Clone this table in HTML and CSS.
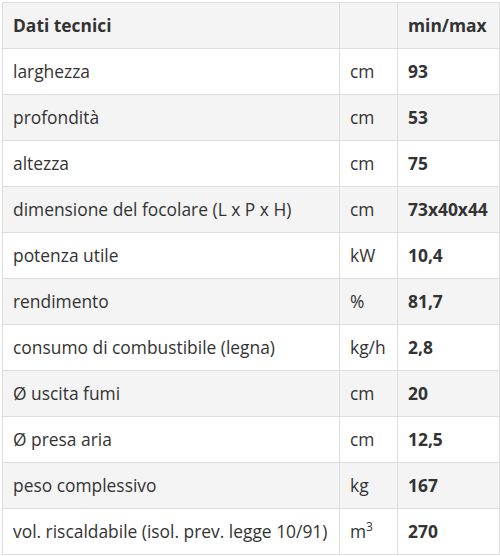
FILE: index.html
```html
<!DOCTYPE html>
<html lang="it">
<head>
<meta charset="utf-8">
<link rel="stylesheet" href="styles.css">
</head>
<body>
<table class="spec">
  <colgroup>
    <col class="c-name"><col class="c-unit"><col class="c-val">
  </colgroup>
  <thead>
    <tr><th>Dati tecnici</th><th></th><th>min/max</th></tr>
  </thead>
  <tbody>
    <tr><td>larghezza</td><td>cm</td><td class="v">93</td></tr>
    <tr><td>profondità</td><td>cm</td><td class="v">53</td></tr>
    <tr><td>altezza</td><td>cm</td><td class="v">75</td></tr>
    <tr><td>dimensione del focolare (L x P x H)</td><td>cm</td><td class="v">73x40x44</td></tr>
    <tr><td>potenza utile</td><td>kW</td><td class="v">10,4</td></tr>
    <tr><td>rendimento</td><td>%</td><td class="v">81,7</td></tr>
    <tr><td>consumo di combustibile (legna)</td><td>kg/h</td><td class="v">2,8</td></tr>
    <tr><td>Ø uscita fumi</td><td>cm</td><td class="v">20</td></tr>
    <tr><td>Ø presa aria</td><td>cm</td><td class="v">12,5</td></tr>
    <tr><td>peso complessivo</td><td>kg</td><td class="v">167</td></tr>
    <tr><td>vol. riscaldabile (isol. prev. legge 10/91)</td><td>m<sup>3</sup></td><td class="v">270</td></tr>
  </tbody>
</table>
</body>
</html>
```
FILE: styles.css
```css
html, body { margin: 0; padding: 0; background: #fff; }
body { padding: 2px 0 0 2px; }
.spec {
  border-collapse: collapse;
  width: 497px;
  font-family: "Open Sans", sans-serif;
  font-size: 17.4px;
  color: #333;
  table-layout: fixed;
}
.c-name { width: 337px; }
.c-unit { width: 58px; }
.c-val { width: 102px; }
.spec th, .spec td {
  border: 1px solid #ddd;
  padding: 11px 10px;
  line-height: 23px;
  text-align: left;
  vertical-align: middle;
  white-space: nowrap;
  overflow: visible;
}
.spec th { font-weight: 700; background: #f4f4f4; }
.spec tbody tr:nth-child(even) td { background: #f4f4f4; }
.spec .v { font-weight: 700; }
.spec sup { font-size: 12px; line-height: 0; vertical-align: 7px; }
```
